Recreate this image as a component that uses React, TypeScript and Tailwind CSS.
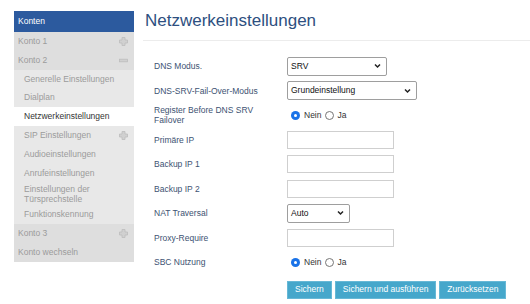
import { ReactNode } from 'react';

const font = { fontFamily: '"Liberation Sans", Arial, sans-serif' };

function PlusIcon() {
  return (
    <svg width="9" height="9" viewBox="0 0 9 9" className="shrink-0">
      <path d="M3 0.5h3v2.5h2.5v3H6v2.5H3V6H0.5V3H3z" fill="#d0d0d0" stroke="#bdbdbd" strokeWidth="0.8" />
    </svg>
  );
}

function MinusIcon() {
  return (
    <svg width="9" height="9" viewBox="0 0 9 9" className="shrink-0">
      <rect x="0.5" y="3.2" width="8" height="2.6" fill="#d0d0d0" stroke="#bdbdbd" strokeWidth="0.8" />
    </svg>
  );
}

function AccountRow({ label, icon }: { label: string; icon?: ReactNode }) {
  return (
    <div className="flex h-[18.8px] items-center justify-between bg-[#dedede] pl-[4px] pr-[6px] text-[#9b9b9b]">
      <span>{label}</span>
      {icon}
    </div>
  );
}

function SubRow({ label, active, icon, tall }: { label: ReactNode; active?: boolean; icon?: ReactNode; tall?: boolean }) {
  return (
    <div
      className={`flex items-center justify-between pl-[10px] pr-[6px] ${tall ? 'h-[23px] leading-[10px]' : 'h-[18.8px]'} ${
        active ? 'bg-white text-[#333]' : 'bg-[#e8e8e8] text-[#9b9b9b]'
      }`}
    >
      <span>{label}</span>
      {icon}
    </div>
  );
}

function Chevron() {
  return (
    <svg width="7" height="5" viewBox="0 0 7 5" className="pointer-events-none absolute right-[6px] top-1/2 -translate-y-1/2">
      <path d="M1 1L3.5 3.5L6 1" fill="none" stroke="#222" strokeWidth="1.5" />
    </svg>
  );
}

function Select({ value, width }: { value: string; width: string }) {
  return (
    <div className={`relative h-[19px] ${width}`}>
      <div className="flex h-full items-center rounded-[2px] border border-[#9e9e9e] bg-white pl-[3px] text-[8.5px] text-[#111]">
        {value}
      </div>
      <Chevron />
    </div>
  );
}

function TextInput() {
  return <div className="h-[18px] w-[107px] border border-[#cfcfcf] bg-white" />;
}

function Radios() {
  return (
    <div className="flex items-center text-[8.5px] text-[#333]">
      <span className="mr-[2px] flex h-[9px] w-[9px] items-center justify-center rounded-full bg-[#1a73e8]">
        <span className="h-[3px] w-[3px] rounded-full bg-white" />
      </span>
      <span className="ml-[2px]">Nein</span>
      <span className="ml-[4px] mr-[3px] h-[9px] w-[9px] rounded-full border border-[#767676] bg-white" />
      <span>Ja</span>
    </div>
  );
}

function Row({ label, children, className = 'h-[24.5px]' }: { label: ReactNode; children: ReactNode; className?: string }) {
  return (
    <div className={`flex items-center ${className}`}>
      <div className="w-[133px] shrink-0 leading-[10px] text-[#3d5272]">{label}</div>
      {children}
    </div>
  );
}

export default function App() {
  return (
    <div className="flex h-[304px] w-[530px] overflow-hidden bg-white pl-[14px] pt-[11px] text-[8.5px]" style={font}>
      <aside className="w-[120px] shrink-0 self-start">
        <div className="flex h-[21px] items-center bg-[#2c5a9e] pl-[4px] text-white">Konten</div>
        <AccountRow label="Konto 1" icon={<PlusIcon />} />
        <AccountRow label="Konto 2" icon={<MinusIcon />} />
        <SubRow label="Generelle Einstellungen" />
        <SubRow label="Dialplan" />
        <SubRow label="Netzwerkeinstellungen" active />
        <SubRow label="SIP Einstellungen" icon={<PlusIcon />} />
        <SubRow label="Audioeinstellungen" />
        <SubRow label="Anrufeinstellungen" />
        <SubRow label={<>Einstellungen der<br />Türsprechstelle</>} tall />
        <SubRow label="Funktionskennung" />
        <AccountRow label="Konto 3" icon={<PlusIcon />} />
        <AccountRow label="Konto wechseln" />
      </aside>

      <main className="ml-[9px] flex-1">
        <h1 className="pl-[2px] text-[17px] leading-[20px] text-[#2d4f80]">Netzwerkeinstellungen</h1>
        <div className="mt-[9px] h-px bg-[#ececec]" />
        <div className="pl-[11px] pt-[13px]">
          <Row label="DNS Modus.">
            <Select value="SRV" width="w-[100px]" />
          </Row>
          <Row label="DNS-SRV-Fail-Over-Modus">
            <Select value="Grundeinstellung" width="w-[130px]" />
          </Row>
          <Row label={<>Register Before DNS SRV<br />Failover</>}>
            <div className="pl-[4px]"><Radios /></div>
          </Row>
          <Row label="Primäre IP"><TextInput /></Row>
          <Row label="Backup IP 1"><TextInput /></Row>
          <Row label="Backup IP 2"><TextInput /></Row>
          <Row label="NAT Traversal">
            <Select value="Auto" width="w-[63px]" />
          </Row>
          <Row label="Proxy-Require"><TextInput /></Row>
          <Row label="SBC Nutzung">
            <div className="pl-[4px]"><Radios /></div>
          </Row>
          <div className="mt-[6px] flex gap-[3px] pl-[133px]">
            {['Sichern', 'Sichern und ausführen', 'Zurücksetzen'].map((t) => (
              <button key={t} className="h-[18px] border border-[#67b8d6] bg-[#46a7cb] px-[7px] text-[8.5px] text-white">
                {t}
              </button>
            ))}
          </div>
        </div>
      </main>
    </div>
  );
}
